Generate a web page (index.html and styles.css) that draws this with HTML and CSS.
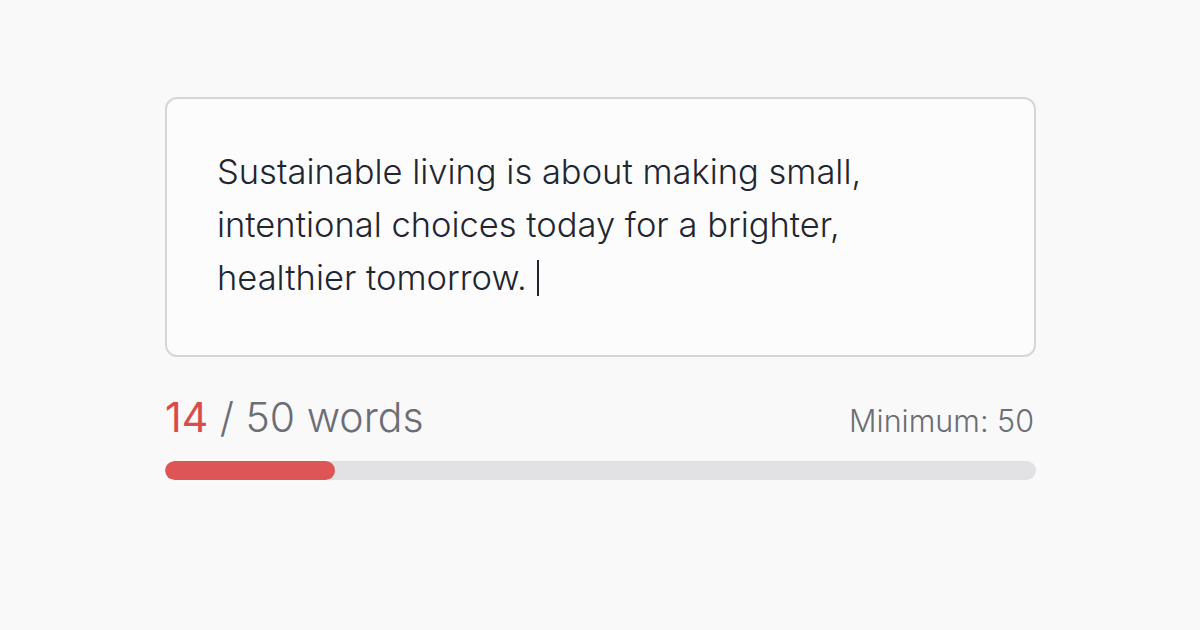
FILE: index.html
```html
<!DOCTYPE html>
<html lang="en">
<head>
    <meta charset="UTF-8">
    <title>Word Counter</title>
    <link rel="stylesheet" href="styles.css">
</head>
<body>
    <div class="editor">
        <!-- Text box -->
        <div class="text-box">
            <p class="text">Sustainable living is about making small,<br>intentional choices today for a brighter,<br>healthier tomorrow.<span class="caret"></span></p>
        </div>

        <!-- Counter row -->
        <div class="counter">
            <div class="count"><span class="current">14</span> / 50 words</div>
            <div class="minimum">Minimum: 50</div>
        </div>

        <div class="progress">
            <div class="progress-fill" style="width: 19.5%"></div>
        </div>
    </div>
</body>
</html>
```

FILE: styles.css
```css
/* General styles */
body {
    margin: 0;
    background: #f9f9f9;
    font-family: Inter, "Open Sans", Arial, sans-serif;
    width: 1200px;
    height: 630px;
    overflow: hidden;
}

.editor {
    width: 871px;
    margin: 97px 0 0 165px;
}

.text-box {
    background: #fcfcfc;
    border: 2px solid #d6d6da;
    border-radius: 12px;
    height: 260px;
    box-sizing: border-box;
    padding: 46px 50px;
}

.text {
    margin: 0;
    font-size: 34.5px;
    font-weight: 350;
    line-height: 53px;
    color: #1f2531;
}

.caret {
    display: inline-block;
    width: 2px;
    height: 36px;
    background: #1f2531;
    margin-left: 10px;
    vertical-align: -6px;
}

/* Counter */
.counter {
    display: flex;
    justify-content: space-between;
    align-items: baseline;
    margin-top: 35px;
    padding-right: 2px;
}

.count {
    font-size: 41px;
    font-weight: 350;
    color: #6b6e75;
}

.count .current {
    color: #d94c4c;
    font-weight: 400;
}

.minimum {
    font-size: 30.5px;
    font-weight: 350;
    color: #6b6e75;
}

.progress {
    margin-top: 19px;
    height: 19px;
    background: #e2e2e4;
    border-radius: 10px;
    overflow: hidden;
}

.progress-fill {
    height: 100%;
    background: #dd5555;
    border-radius: 10px;
}
```
